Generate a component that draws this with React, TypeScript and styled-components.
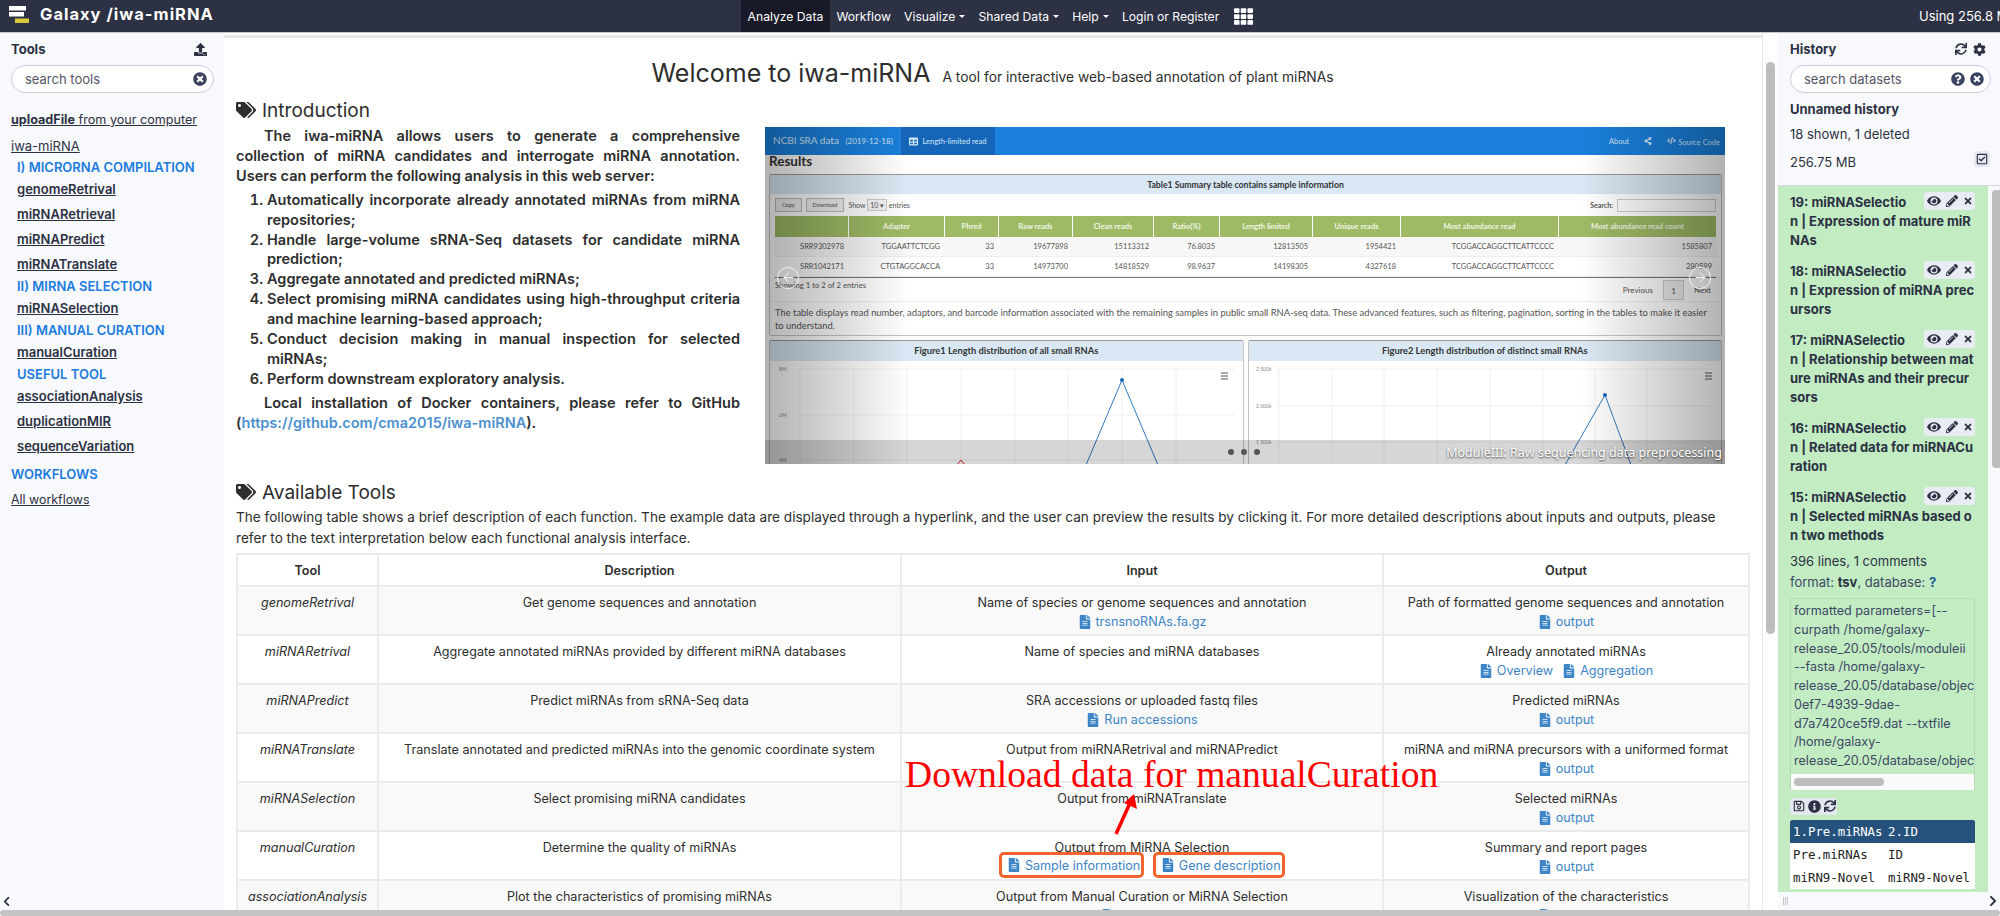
import React from 'react'
import styled, { createGlobalStyle } from 'styled-components'
import {
    FaChevronLeft,
    FaChevronRight,
    FaCode,
    FaCog,
    FaEye,
    FaFileAlt,
    FaInfoCircle,
    FaPencilAlt,
    FaQuestionCircle,
    FaRegCheckSquare,
    FaRegSave,
    FaShareAlt,
    FaSync,
    FaTable,
    FaTags,
    FaTh,
    FaTimes,
    FaTimesCircle,
    FaUpload,
} from 'react-icons/fa'
import { ArrowLeft, ArrowRight } from 'lucide-react'

const navItems = [
    { label: 'Analyze Data', active: true },
    { label: 'Workflow' },
    { label: 'Visualize', caret: true },
    { label: 'Shared Data', caret: true },
    { label: 'Help', caret: true },
    { label: 'Login or Register' },
]

const sideItems = [
    { kind: 'section', label: 'I) MICRORNA COMPILATION' },
    { kind: 'tool', label: 'genomeRetrival' },
    { kind: 'tool', label: 'miRNARetrieval' },
    { kind: 'tool', label: 'miRNAPredict' },
    { kind: 'tool', label: 'miRNATranslate' },
    { kind: 'section', label: 'II) MIRNA SELECTION' },
    { kind: 'tool', label: 'miRNASelection' },
    { kind: 'section', label: 'III) MANUAL CURATION' },
    { kind: 'tool', label: 'manualCuration' },
    { kind: 'section', label: 'USEFUL TOOL' },
    { kind: 'tool', label: 'associationAnalysis' },
    { kind: 'tool', label: 'duplicationMIR' },
    { kind: 'tool', label: 'sequenceVariation' },
]

const introList = [
    'Automatically incorporate already annotated miRNAs from miRNA repositories;',
    'Handle large-volume sRNA-Seq datasets for candidate miRNA prediction;',
    'Aggregate annotated and predicted miRNAs;',
    'Select promising miRNA candidates using high-throughput criteria and machine learning-based approach;',
    'Conduct decision making in manual inspection for selected miRNAs;',
    'Perform downstream exploratory analysis.',
]

type ToolRow = {
    tool: string
    description: string
    input: string
    inputLinks: { label: string; boxed?: boolean }[]
    output: string
    outputLinks: string[]
}

const toolRows: ToolRow[] = [
    {
        tool: 'genomeRetrival',
        description: 'Get genome sequences and annotation',
        input: 'Name of species or genome sequences and annotation',
        inputLinks: [{ label: 'trsnsnoRNAs.fa.gz' }],
        output: 'Path of formatted genome sequences and annotation',
        outputLinks: ['output'],
    },
    {
        tool: 'miRNARetrival',
        description: 'Aggregate annotated miRNAs provided by different miRNA databases',
        input: 'Name of species and miRNA databases',
        inputLinks: [],
        output: 'Already annotated miRNAs',
        outputLinks: ['Overview', 'Aggregation'],
    },
    {
        tool: 'miRNAPredict',
        description: 'Predict miRNAs from sRNA-Seq data',
        input: 'SRA accessions or uploaded fastq files',
        inputLinks: [{ label: 'Run accessions' }],
        output: 'Predicted miRNAs',
        outputLinks: ['output'],
    },
    {
        tool: 'miRNATranslate',
        description: 'Translate annotated and predicted miRNAs into the genomic coordinate system',
        input: 'Output from miRNARetrival and miRNAPredict',
        inputLinks: [],
        output: 'miRNA and miRNA precursors with a uniformed format',
        outputLinks: ['output'],
    },
    {
        tool: 'miRNASelection',
        description: 'Select promising miRNA candidates',
        input: 'Output from miRNATranslate',
        inputLinks: [],
        output: 'Selected miRNAs',
        outputLinks: ['output'],
    },
    {
        tool: 'manualCuration',
        description: 'Determine the quality of miRNAs',
        input: 'Output from MiRNA Selection',
        inputLinks: [
            { label: 'Sample information', boxed: true },
            { label: 'Gene description', boxed: true },
        ],
        output: 'Summary and report pages',
        outputLinks: ['output'],
    },
    {
        tool: 'associationAnalysis',
        description: 'Plot the characteristics of promising miRNAs',
        input: 'Output from Manual Curation or MiRNA Selection',
        inputLinks: [{ label: 'Gene table' }],
        output: 'Visualization of the characteristics',
        outputLinks: ['output'],
    },
]

const datasets = [
    ['19: miRNASelectio', 'n | Expression of mature miR', 'NAs'],
    ['18: miRNASelectio', 'n | Expression of miRNA prec', 'ursors'],
    ['17: miRNASelectio', 'n | Relationship between mat', 'ure miRNAs and their precur', 'sors'],
    ['16: miRNASelectio', 'n | Related data for miRNACu', 'ration'],
    ['15: miRNASelectio', 'n | Selected miRNAs based o', 'n two methods'],
]

const paramLines = [
    'formatted parameters=[--',
    'curpath /home/galaxy-',
    'release_20.05/tools/moduleii',
    '--fasta /home/galaxy-',
    'release_20.05/database/objects/',
    '0ef7-4939-9dae-',
    'd7a7420ce5f9.dat --txtfile',
    '/home/galaxy-',
    'release_20.05/database/objects/',
]

const sraHeaders = ['', 'Adapter', 'Phred', 'Raw reads', 'Clean reads', 'Ratio(%)', 'Length limited', 'Unique reads', 'Most abundance read', 'Most abundance read count']
const sraRows = [
    ['SRR9302978', 'TGGAATTCTCGG', '33', '19677898', '15113312', '76.8035', '12813505', '1954421', 'TCGGACCAGGCTTCATTCCCC', '1585807'],
    ['SRR1042171', 'CTGTAGGCACCA', '33', '14973700', '14818529', '98.9637', '14198305', '4327618', 'TCGGACCAGGCTTCATTCCCC', '280599'],
]

export default function App() {
    return (
        <Page>
            <GlobalStyle />
            <Navbar>
                <Brand>
                    <svg width="32" height="26" viewBox="0 0 32 26">
                        <rect x="9" y="6" width="17" height="4.5" fill="#fff" />
                        <rect x="9" y="12" width="15" height="4.5" fill="#fff" />
                        <rect x="15" y="18.5" width="14" height="4.5" fill="#d8c83a" />
                    </svg>
                    <BrandText>Galaxy /iwa-miRNA</BrandText>
                </Brand>
                <NavList>
                    {navItems.map((item) => (
                        <NavItem key={item.label} $active={item.active}>
                            {item.label}
                            {item.caret && <Caret />}
                        </NavItem>
                    ))}
                    <NavGrid>
                        <FaTh />
                    </NavGrid>
                </NavList>
                <Quota>Using 256.8 MB</Quota>
            </Navbar>

            <Body>
                <LeftPanel>
                    <PanelHeader>
                        <PanelTitle>Tools</PanelTitle>
                        <FaUpload size={13} />
                    </PanelHeader>
                    <SearchBox>
                        <SearchText>search tools</SearchText>
                        <FaTimesCircle size={14} />
                    </SearchBox>
                    <UploadLink>
                        <b>uploadFile</b> from your computer
                    </UploadLink>
                    <GroupLink>iwa-miRNA</GroupLink>
                    {sideItems.map((item) =>
                        item.kind === 'section' ? (
                            <SideSection key={item.label}>{item.label}</SideSection>
                        ) : (
                            <SideTool key={item.label}>{item.label}</SideTool>
                        )
                    )}
                    <WorkflowTitle>WORKFLOWS</WorkflowTitle>
                    <WorkflowLink>All workflows</WorkflowLink>
                    <CollapseBar>
                        <FaChevronLeft size={11} />
                    </CollapseBar>
                </LeftPanel>

                <Center>
                    <TitleRow>
                        <MainTitle>Welcome to iwa-miRNA</MainTitle>
                        <SubTitle>A tool for interactive web-based annotation of plant miRNAs</SubTitle>
                    </TitleRow>

                    <SectionHeading>
                        <FaTags size={20} />
                        Introduction
                    </SectionHeading>

                    <IntroRow>
                        <IntroText>
                            <IntroPara>
                                The iwa-miRNA allows users to generate a comprehensive collection of miRNA candidates and
                                interrogate miRNA annotation. Users can perform the following analysis in this web server:
                            </IntroPara>
                            <IntroList>
                                {introList.map((line) => (
                                    <li key={line}>{line}</li>
                                ))}
                            </IntroList>
                            <IntroPara>
                                Local installation of Docker containers, please refer to GitHub (
                                <IntroLink>https://github.com/cma2015/iwa-miRNA</IntroLink>).
                            </IntroPara>
                        </IntroText>
                        <Carousel />
                    </IntroRow>

                    <ToolsHeading>
                        <FaTags size={20} />
                        Available Tools
                    </ToolsHeading>
                    <ToolsIntro>
                        The following table shows a brief description of each function. The example data are displayed
                        through a hyperlink, and the user can preview the results by clicking it. For more detailed
                        descriptions about inputs and outputs, please refer to the text interpretation below each
                        functional analysis interface.
                    </ToolsIntro>

                    <ToolsTable>
                        <colgroup>
                            <col width="141" />
                            <col width="523" />
                            <col width="482" />
                            <col width="366" />
                        </colgroup>
                        <thead>
                            <tr>
                                <th>Tool</th>
                                <th>Description</th>
                                <th>Input</th>
                                <th>Output</th>
                            </tr>
                        </thead>
                        <tbody>
                            {toolRows.map((row) => (
                                <tr key={row.tool}>
                                    <td>
                                        <i>{row.tool}</i>
                                    </td>
                                    <td>{row.description}</td>
                                    <td>
                                        {row.input}
                                        <LinkLine>
                                            {row.inputLinks.map((link) => (
                                                <DataLink key={link.label} $boxed={link.boxed}>
                                                    <FaFileAlt size={14} />
                                                    {link.label}
                                                </DataLink>
                                            ))}
                                        </LinkLine>
                                    </td>
                                    <td>
                                        {row.output}
                                        <LinkLine>
                                            {row.outputLinks.map((link) => (
                                                <DataLink key={link}>
                                                    <FaFileAlt size={14} />
                                                    {link}
                                                </DataLink>
                                            ))}
                                        </LinkLine>
                                    </td>
                                </tr>
                            ))}
                        </tbody>
                    </ToolsTable>

                    <Annotation>Download data for manualCuration</Annotation>
                    <AnnotationArrow width="30" height="44" viewBox="0 0 30 44">
                        <path d="M3 41 L17 10" stroke="#f00" strokeWidth="3.5" fill="none" />
                        <path d="M21 1 L24 16 L11 10 Z" fill="#f00" />
                    </AnnotationArrow>
                </Center>

                <CenterScroll>
                    <CenterThumb />
                </CenterScroll>

                <RightPanel>
                    <RightTop>
                        <PanelHeader>
                            <PanelTitle>History</PanelTitle>
                            <HeaderIcons>
                                <FaSync size={12} />
                                <FaCog size={13} />
                            </HeaderIcons>
                        </PanelHeader>
                        <SearchBox>
                            <SearchText>search datasets</SearchText>
                            <FaQuestionCircle size={14} />
                            <FaTimesCircle size={14} />
                        </SearchBox>
                        <HistoryName>Unnamed history</HistoryName>
                        <HistoryMeta>18 shown, 1 deleted</HistoryMeta>
                        <HistorySize>
                            256.75 MB
                            <CheckButton>
                                <FaRegCheckSquare size={12} />
                            </CheckButton>
                        </HistorySize>
                    </RightTop>
                    <DatasetArea>
                        <DatasetList>
                            {datasets.map((lines) => (
                                <Dataset key={lines[0]}>
                                    {lines.map((line, i) => (
                                        <DatasetLine key={line}>
                                            {line}
                                            {i === 0 && (
                                                <DatasetActions>
                                                    <FaEye size={14} />
                                                    <FaPencilAlt size={12} />
                                                    <FaTimes size={10} />
                                                </DatasetActions>
                                            )}
                                        </DatasetLine>
                                    ))}
                                </Dataset>
                            ))}
                            <DatasetInfo>396 lines, 1 comments</DatasetInfo>
                            <DatasetFormat>
                                format: <b>tsv</b>, database: <FormatHelp>?</FormatHelp>
                            </DatasetFormat>
                            <ParamBox>
                                <ParamText>
                                    {paramLines.map((line, i) => (
                                        <div key={i}>{line}</div>
                                    ))}
                                </ParamText>
                                <ParamScroll>
                                    <ParamThumb />
                                </ParamScroll>
                            </ParamBox>
                            <DatasetButtons>
                                <FaRegSave size={12} />
                                <FaInfoCircle size={13} />
                                <FaSync size={12} />
                            </DatasetButtons>
                            <Peek>
                                <PeekHead>
                                    <span>1.Pre.miRNAs</span>
                                    <span>2.ID</span>
                                </PeekHead>
                                <PeekRow>
                                    <span>Pre.miRNAs</span>
                                    <span>ID</span>
                                </PeekRow>
                                <PeekRow>
                                    <span>miRN9-Novel</span>
                                    <span>miRN9-Novel</span>
                                </PeekRow>
                            </Peek>
                        </DatasetList>
                        <DatasetScroll>
                            <DatasetThumb />
                        </DatasetScroll>
                    </DatasetArea>
                    <RightCollapse>
                        <DragHandle />
                        <FaChevronRight size={12} />
                    </RightCollapse>
                </RightPanel>
            </Body>
            <PageScroll />
        </Page>
    )
}

const Carousel: React.FC = () => (
    <CarouselBox>
        <SraNav>
            <SraBrand>
                NCBI SRA data <small>(2019-12-18)</small>
            </SraBrand>
            <SraTab>
                <FaTable size={9} />
                Length-limited read
            </SraTab>
            <SraNavRight>
                <span>About</span>
                <FaShareAlt size={8} />
                <span>
                    <FaCode size={9} /> Source Code
                </span>
            </SraNavRight>
        </SraNav>
        <SraResults>Results</SraResults>
        <SraBox>
            <SraBoxHead>Table1 Summary table contains sample information</SraBoxHead>
            <SraControls>
                <SraBtn>Copy</SraBtn>
                <SraBtn>Download</SraBtn>
                <span>
                    Show <SraSelect>10 ▾</SraSelect> entries
                </span>
                <SraSearch>
                    Search: <SraSearchInput />
                </SraSearch>
            </SraControls>
            <SraGrid>
                {sraHeaders.map((h, i) => (
                    <SraHead key={i}>{h}</SraHead>
                ))}
                {sraRows.map((row, r) =>
                    row.map((cell, c) => (
                        <SraCell key={`${r}-${c}`} $odd={r === 0}>
                            {cell}
                        </SraCell>
                    ))
                )}
            </SraGrid>
            <SraFooter>
                <span>Showing 1 to 2 of 2 entries</span>
                <SraPager>
                    <span>Previous</span>
                    <SraPage>1</SraPage>
                    <span>Next</span>
                </SraPager>
            </SraFooter>
            <SraNote>
                The table displays read number, adaptors, and barcode information associated with the remaining samples in
                public small RNA-seq data. These advanced features, such as filtering, pagination, sorting in the tables to
                make it easier to understand.
            </SraNote>
        </SraBox>
        <SraFigures>
            <SraFigure>
                <SraFigHead>Figure1 Length distribution of all small RNAs</SraFigHead>
                <svg width="473" height="104" viewBox="0 0 473 104">
                    <g stroke="#f0f0f0">
                        <line x1="28" y1="8" x2="465" y2="8" />
                        <line x1="28" y1="54" x2="465" y2="54" />
                        <line x1="28" y1="99" x2="465" y2="99" />
                        {[30, 84, 137, 191, 245, 298, 352, 406].map((x) => (
                            <line key={x} x1={x} y1="8" x2={x} y2="104" />
                        ))}
                    </g>
                    <g fontSize="5" fill="#888" fontFamily="Lato, sans-serif">
                        <text x="9" y="10">8M</text>
                        <text x="9" y="56">6M</text>
                        <text x="9" y="101">4M</text>
                    </g>
                    <path d="M316 104 L352 19 L388 104" stroke="#2f7ac0" strokeWidth="1" fill="none" />
                    <circle cx="352" cy="19" r="2" fill="#1767b5" />
                    <path d="M187 104 L191 99 L195 104" stroke="#e0202c" strokeWidth="1" fill="none" />
                    <path d="M451 12 H458 M451 15 H458 M451 18 H458" stroke="#555" strokeWidth="1" />
                </svg>
            </SraFigure>
            <SraFigure>
                <SraFigHead>Figure2 Length distribution of distinct small RNAs</SraFigHead>
                <svg width="473" height="104" viewBox="0 0 473 104">
                    <g stroke="#f0f0f0">
                        <line x1="28" y1="8" x2="465" y2="8" />
                        <line x1="28" y1="45" x2="465" y2="45" />
                        <line x1="28" y1="81" x2="465" y2="81" />
                        {[30, 83, 135, 188, 241, 294, 346, 398].map((x) => (
                            <line key={x} x1={x} y1="8" x2={x} y2="104" />
                        ))}
                    </g>
                    <g fontSize="5" fill="#888" fontFamily="Lato, sans-serif">
                        <text x="7" y="10">2 500k</text>
                        <text x="7" y="47">2 000k</text>
                        <text x="7" y="83">1 500k</text>
                    </g>
                    <path d="M316 104 L356 34 L382 104" stroke="#2f7ac0" strokeWidth="1" fill="none" />
                    <circle cx="356" cy="34" r="2" fill="#1767b5" />
                    <path d="M456 12 H463 M456 15 H463 M456 18 H463" stroke="#555" strokeWidth="1" />
                </svg>
            </SraFigure>
        </SraFigures>
        <FadeLeft>
            <CarouselArrow>
                <ArrowLeft size={15} strokeWidth={1.5} />
            </CarouselArrow>
        </FadeLeft>
        <FadeRight>
            <CarouselArrow>
                <ArrowRight size={15} strokeWidth={1.5} />
            </CarouselArrow>
        </FadeRight>
        <CaptionBand>
            <Dots>
                <Dot />
                <Dot />
                <Dot />
            </Dots>
            <Caption>ModuleIII: Raw sequencing data preprocessing</Caption>
        </CaptionBand>
    </CarouselBox>
)

const GlobalStyle = createGlobalStyle`
    html, body {
        margin: 0;
        height: 100%;
        overflow: hidden;
    }
    body {
        font-family: Inter, "Liberation Sans", sans-serif;
        font-size: 13.6px;
        color: #2c3143;
    }
`

const Page = styled.div`
    height: 916px;
    display: flex;
    flex-direction: column;
    overflow: hidden;
    background: #fff;
`

const Navbar = styled.div`
    height: 33px;
    flex: none;
    display: flex;
    background: #2c3143;
    color: #fff;
    border-bottom: 1px solid #c8c8cc;
    box-sizing: border-box;
`

const Brand = styled.div`
    width: 741px;
    flex: none;
    display: flex;
    align-items: flex-start;
    gap: 8px;
    svg {
        flex: none;
    }
`

const BrandText = styled.span`
    font-size: 16.5px;
    font-weight: 700;
    letter-spacing: 1px;
    line-height: 28px;
`

const NavList = styled.div`
    display: flex;
    align-items: stretch;
`

const NavItem = styled.div<{ $active?: boolean }>`
    display: flex;
    align-items: center;
    height: 32px;
    padding: 0 6.6px;
    font-size: 12.15px;
    white-space: nowrap;
    background: ${(p) => (p.$active ? '#181b27' : 'transparent')};
`

const Caret = styled.span`
    margin-left: 4px;
    border-top: 3px solid #fff;
    border-left: 3px solid transparent;
    border-right: 3px solid transparent;
`

const NavGrid = styled.div`
    display: flex;
    align-items: center;
    margin-left: 8px;
    font-size: 19px;
`

const Quota = styled.div`
    margin-left: auto;
    width: 81px;
    overflow: hidden;
    white-space: nowrap;
    font-size: 13px;
    line-height: 33px;
`

const Body = styled.div`
    flex: 1;
    min-height: 0;
    display: flex;
`

const LeftPanel = styled.div`
    width: 224px;
    flex: none;
    box-sizing: border-box;
    padding: 0 11px;
    background: #f8f9fc;
    display: flex;
    flex-direction: column;
    position: relative;
`

const PanelHeader = styled.div`
    height: 32px;
    flex: none;
    display: flex;
    align-items: center;
    justify-content: space-between;
    padding-right: 6px;
`

const PanelTitle = styled.div`
    font-weight: 700;
    font-size: 13px;
`

const HeaderIcons = styled.div`
    display: flex;
    gap: 6px;
    align-items: center;
    margin-right: -2px;
`

const SearchBox = styled.div`
    height: 28px;
    flex: none;
    box-sizing: border-box;
    display: flex;
    align-items: center;
    gap: 5px;
    padding: 0 6px 0 13px;
    margin-right: -1px;
    background: #fff;
    border: 1px solid #c9cde0;
    border-radius: 14px;
    color: #3a4460;
`

const SearchText = styled.span`
    flex: 1;
    font-size: 13px;
    color: #556;
`

const UploadLink = styled.div`
    margin-top: 17px;
    line-height: 20px;
    font-size: 12.6px;
    text-decoration: underline;
    white-space: nowrap;
`

const GroupLink = styled.div`
    margin-top: 6px;
    line-height: 20px;
    font-size: 13px;
    text-decoration: underline;
`

const SideSection = styled.div`
    padding-left: 6px;
    line-height: 22px;
    font-size: 13px;
    font-weight: 600;
    color: #1b7be0;
`

const SideTool = styled.div`
    padding-left: 6px;
    line-height: 22px;
    font-size: 13px;
    font-weight: 600;
    text-decoration: underline;
    & + & {
        margin-top: 3px;
    }
`

const WorkflowTitle = styled.div`
    margin-top: 6px;
    line-height: 22px;
    font-size: 13px;
    font-weight: 600;
    color: #1b7be0;
`

const WorkflowLink = styled(GroupLink)`
    margin-top: 5px;
    font-size: 12.4px;
`

const CollapseBar = styled.div`
    position: absolute;
    left: 0;
    right: 0;
    bottom: 0;
    height: 18px;
    display: flex;
    align-items: center;
    padding-left: 1px;
`

const Center = styled.div`
    flex: 1;
    min-width: 0;
    box-sizing: border-box;
    padding: 0 13px 0 12px;
    overflow: hidden;
    position: relative;
    color: #2d2d2d;
    &::before {
        content: '';
        display: block;
        height: 3px;
        margin: 2px -13px 0 -12px;
        background: #e6e6e6;
    }
`

const TitleRow = styled.div`
    display: flex;
    justify-content: center;
    align-items: baseline;
    gap: 12px;
    height: 50px;
    margin-top: 10px;
`

const MainTitle = styled.h1`
    margin: 0;
    font-size: 25px;
    font-weight: 400;
    line-height: 50px;
`

const SubTitle = styled.span`
    font-size: 13.8px;
`

const SectionHeading = styled.h2`
    margin: 0;
    display: flex;
    align-items: center;
    gap: 6px;
    height: 24px;
    font-size: 19px;
    font-weight: 400;
`

const ToolsHeading = styled(SectionHeading)`
    margin-top: 16px;
`

const IntroRow = styled.div`
    display: flex;
    gap: 25px;
    margin-top: 4px;
`

const IntroText = styled.div`
    width: 504px;
    flex: none;
    font-size: 14.5px;
    font-weight: 600;
    line-height: 19.9px;
    text-align: justify;
`

const IntroPara = styled.p`
    margin: 0 0 4px;
    text-indent: 28px;
`

const IntroList = styled.ol`
    margin: 0 0 4px;
    padding-left: 31px;
`

const IntroLink = styled.span`
    color: #4a90d0;
`

const ToolsIntro = styled.p`
    margin: 3px 0 5px;
    font-size: 13.6px;
    line-height: 20.5px;
`

const ToolsTable = styled.table`
    width: 1512px;
    table-layout: fixed;
    border-collapse: collapse;
    font-size: 12.6px;
    th, td {
        border: 2px solid #ebebeb;
        text-align: center;
        vertical-align: top;
    }
    th {
        height: 32px;
        box-sizing: border-box;
        font-weight: 600;
        vertical-align: middle;
    }
    td {
        height: 49px;
        box-sizing: border-box;
        padding: 6px 4px 0;
        line-height: 19px;
    }
    tbody tr:nth-child(odd) {
        background: #f9f9f9;
    }
`

const LinkLine = styled.div`
    display: flex;
    justify-content: center;
    gap: 9px;
`

const DataLink = styled.span<{ $boxed?: boolean }>`
    display: inline-flex;
    align-items: center;
    gap: 4px;
    color: #3d85c6;
    ${(p) =>
        p.$boxed &&
        `
        height: 26px;
        margin-top: -5px;
        padding: 0 1px 0 4.5px;
        border: 3px solid #f0642e;
        border-radius: 5px;
        box-sizing: border-box;
        background: #fff;
    `}
`

const Annotation = styled.div`
    position: absolute;
    left: 681px;
    top: 720px;
    font-family: "Liberation Serif", serif;
    font-size: 37.6px;
    color: #f00;
    white-space: nowrap;
`

const AnnotationArrow = styled.svg`
    position: absolute;
    left: 889px;
    top: 760px;
`

const CenterScroll = styled.div`
    width: 16px;
    flex: none;
    box-sizing: border-box;
    border-left: 1px solid #e6e6e6;
    padding: 29px 0 0 3px;
`

const CenterThumb = styled.div`
    width: 9px;
    height: 572px;
    border-radius: 5px;
    background: #bdbdbd;
`

const RightPanel = styled.div`
    width: 222px;
    flex: none;
    display: flex;
    flex-direction: column;
    background: #f8f9fc;
`

const RightTop = styled.div`
    padding: 0 10px 0 12px;
    height: 153px;
    flex: none;
    box-sizing: border-box;
    border-bottom: 1px solid #d8d8de;
`

const HistoryName = styled.div`
    margin-top: 6px;
    font-size: 13px;
    font-weight: 700;
    line-height: 20px;
`

const HistoryMeta = styled.div`
    margin-top: 5px;
    font-size: 13px;
    line-height: 20px;
`

const HistorySize = styled.div`
    margin-top: 8px;
    font-size: 13px;
    line-height: 20px;
    display: flex;
    justify-content: space-between;
    align-items: center;
`

const CheckButton = styled.span`
    display: flex;
    align-items: center;
    justify-content: center;
    width: 16px;
    height: 16px;
    margin-top: -6px;
    background: #e6e9f2;
    border-radius: 3px;
`

const DatasetArea = styled.div`
    flex: 1;
    min-height: 0;
    display: flex;
`

const DatasetList = styled.div`
    width: 210px;
    flex: none;
    box-sizing: border-box;
    padding: 7px 13px 0 12px;
    background: #c3ecc3;
    overflow: hidden;
`

const Dataset = styled.div`
    margin-bottom: 12px;
`

const DatasetLine = styled.div`
    position: relative;
    font-size: 13px;
    font-weight: 700;
    line-height: 19px;
    white-space: nowrap;
`

const DatasetActions = styled.span`
    position: absolute;
    right: 0;
    top: -1px;
    width: 51px;
    height: 18px;
    display: flex;
    align-items: center;
    justify-content: space-around;
    background: #e9ecf3;
    border-radius: 3px;
`

const DatasetInfo = styled.div`
    margin-top: -6px;
    font-size: 13px;
    line-height: 20px;
`

const DatasetFormat = styled.div`
    margin-top: 1px;
    font-size: 13px;
    line-height: 20px;
    color: #3c4763;
    b {
        color: #2c3143;
    }
`

const FormatHelp = styled.b`
    && {
        color: #1e5b96;
    }
`

const ParamBox = styled.div`
    margin-top: 6px;
    border: 1px solid #b7d8b7;
    border-bottom: 0;
    border-radius: 3px 3px 0 0;
`

const ParamText = styled.div`
    padding: 3px 0 3px 3px;
    font-size: 12.6px;
    line-height: 18.75px;
    white-space: nowrap;
    overflow: hidden;
    color: #3c4763;
`

const ParamScroll = styled.div`
    height: 16px;
    background: #fafafa;
    padding: 4px 3px;
    box-sizing: border-box;
`

const ParamThumb = styled.div`
    width: 90px;
    height: 8px;
    border-radius: 4px;
    background: #bdbdbd;
`

const DatasetButtons = styled.div`
    display: inline-flex;
    align-items: center;
    gap: 3px;
    height: 17px;
    margin-top: 8px;
    padding: 0 1px 0 3px;
    background: #e3e7ef;
    border-radius: 3px;
`

const Peek = styled.div`
    margin-top: 5px;
    background: #fff;
    font-family: "DejaVu Sans Mono", "Liberation Mono", monospace;
    font-size: 12.4px;
    color: #222;
`

const PeekHead = styled.div`
    display: grid;
    grid-template-columns: 95px 1fr;
    padding-left: 3px;
    height: 23px;
    line-height: 23px;
    background: #25527c;
    color: #fff;
    border-radius: 2px 2px 0 0;
`

const PeekRow = styled.div`
    display: grid;
    grid-template-columns: 95px 1fr;
    padding-left: 3px;
    height: 23px;
    line-height: 23px;
    white-space: nowrap;
`

const DatasetScroll = styled.div`
    flex: 1;
    padding: 4px 0 0 4px;
`

const DatasetThumb = styled.div`
    width: 8px;
    height: 278px;
    border-radius: 4px 0 0 4px;
    background: #bdbdbd;
`

const RightCollapse = styled.div`
    height: 18px;
    flex: none;
    display: flex;
    align-items: center;
    justify-content: space-between;
    padding-right: 1px;
`

const DragHandle = styled.span`
    width: 6px;
    height: 8px;
    margin-left: 5px;
    background: repeating-linear-gradient(90deg, #c5c5c5 0 1px, transparent 1px 2px);
`

const PageScroll = styled.div`
    height: 6px;
    flex: none;
    background: #c4c4c4;
    border-radius: 3px;
`

/* the screenshot shown in the carousel */
const CarouselBox = styled.div`
    position: relative;
    width: 960px;
    height: 337px;
    margin-top: 1px;
    overflow: hidden;
    flex: none;
    background: #fff;
    font-family: Lato, sans-serif;
    font-size: 7.5px;
    color: #555;
`

const SraNav = styled.div`
    height: 28px;
    display: flex;
    align-items: stretch;
    background: #1a80dc;
    color: #d5e8fa;
`

const SraBrand = styled.div`
    width: 136px;
    padding-left: 8px;
    box-sizing: border-box;
    font-size: 10px;
    line-height: 26px;
    small {
        font-size: 8px;
        margin-left: 4px;
    }
`

const SraTab = styled.div`
    width: 94px;
    display: flex;
    align-items: center;
    justify-content: center;
    gap: 4px;
    background: #1565b8;
    font-size: 7.5px;
`

const SraNavRight = styled.div`
    margin-left: auto;
    display: flex;
    align-items: center;
    gap: 15px;
    padding-right: 5px;
    font-size: 7.5px;
`

const SraResults = styled.div`
    height: 19px;
    padding-left: 4px;
    font-size: 13.5px;
    font-weight: 700;
    line-height: 13px;
    color: #333;
`

const SraBox = styled.div`
    margin: 0 3px 0 4px;
    height: 162px;
    box-sizing: border-box;
    border: 1px solid #c4c4c4;
    border-top: 1px solid #999;
    border-radius: 2px;
    display: flex;
    flex-direction: column;
`

const SraBoxHead = styled.div`
    height: 19px;
    flex: none;
    background: #d9e8f4;
    color: #333;
    text-align: center;
    font-size: 8.7px;
    font-weight: 700;
    line-height: 19px;
`

const SraFigHead = styled(SraBoxHead)`
    height: 20px;
    line-height: 20px;
    font-size: 9.3px;
`

const SraControls = styled.div`
    height: 22px;
    flex: none;
    display: flex;
    align-items: center;
    gap: 4px;
    padding: 0 5px;
    font-size: 7px;
`

const SraBtn = styled.span`
    padding: 3px 6px;
    font-size: 5.5px;
    background: #efefef;
    border: 1px solid #bbb;
`

const SraSelect = styled.span`
    padding: 1px 2px;
    border: 1px solid #ccc;
    background: #f4f4f4;
`

const SraSearch = styled.span`
    margin-left: auto;
    display: flex;
    align-items: center;
    gap: 4px;
    font-weight: 700;
`

const SraSearchInput = styled.span`
    width: 97px;
    height: 11px;
    border: 1px solid #ccc;
`

const SraGrid = styled.div`
    margin: 0 5px;
    display: grid;
    grid-template-columns: 74px 96px 54px 74px 81px 66px 93px 88px 158px 158px;
    border-bottom: 1px solid #777;
`

const SraHead = styled.div`
    height: 21px;
    margin-right: 1px;
    line-height: 21px;
    text-align: center;
    background: #9eba65;
    color: #f2f6e8;
    font-weight: 700;
`

const SraCell = styled.div<{ $odd: boolean }>`
    height: 20px;
    line-height: 19px;
    padding-right: 5px;
    text-align: right;
    white-space: nowrap;
    background: ${(p) => (p.$odd ? '#f8f8f8' : '#fff')};
    border-bottom: 1px solid #eee;
    box-sizing: border-box;
`

const SraFooter = styled.div`
    height: 24px;
    flex: none;
    display: flex;
    justify-content: space-between;
    padding: 2px 5px 0;
    border-bottom: 1px solid #eee;
    box-sizing: border-box;
    font-size: 7.7px;
`

const SraPager = styled.div`
    display: flex;
    align-items: center;
    gap: 10px;
    height: 20px;
    padding-right: 5px;
    font-size: 8px;
`

const SraPage = styled.span`
    width: 21px;
    height: 20px;
    line-height: 20px;
    text-align: center;
    background: #eee;
    border: 1px solid #ccc;
    box-sizing: border-box;
`

const SraNote = styled.div`
    padding: 4px 5px;
    font-size: 9.4px;
    line-height: 13px;
`

const SraFigures = styled.div`
    display: flex;
    gap: 4px;
    margin: 4px 3px 0 4px;
`

const SraFigure = styled.div`
    flex: 1;
    border: 1px solid #c4c4c4;
    border-top: 1px solid #999;
    border-radius: 2px;
    overflow: hidden;
    svg {
        display: block;
    }
`

const Fade = styled.div`
    position: absolute;
    top: 0;
    bottom: 0;
    width: 144px;
    display: flex;
    align-items: center;
    padding-bottom: 36px;
    box-sizing: border-box;
`

const FadeLeft = styled(Fade)`
    left: 0;
    padding-left: 12px;
    background: linear-gradient(90deg, rgba(0, 0, 0, 0.3), rgba(0, 0, 0, 0));
`

const FadeRight = styled(Fade)`
    right: 0;
    justify-content: flex-end;
    padding-right: 14px;
    background: linear-gradient(270deg, rgba(0, 0, 0, 0.3), rgba(0, 0, 0, 0));
`

const CarouselArrow = styled.span`
    width: 22px;
    height: 22px;
    box-sizing: border-box;
    display: flex;
    align-items: center;
    justify-content: center;
    color: #fff;
    border: 1.5px solid rgba(255, 255, 255, 0.8);
    border-radius: 50%;
`

const CaptionBand = styled.div`
    position: absolute;
    left: 0;
    right: 0;
    bottom: 0;
    height: 24px;
    display: flex;
    align-items: center;
    justify-content: flex-end;
    padding-right: 3px;
    background: rgba(0, 0, 0, 0.16);
`

const Dots = styled.div`
    display: flex;
    gap: 7px;
    position: absolute;
    left: 463px;
`

const Dot = styled.span`
    width: 6px;
    height: 6px;
    border-radius: 50%;
    background: #555;
`

const Caption = styled.span`
    font-family: "Noto Sans", sans-serif;
    font-size: 12.5px;
    color: #fff;
    text-shadow: 0 1px 2px rgba(0, 0, 0, 0.7);
    white-space: nowrap;
`
